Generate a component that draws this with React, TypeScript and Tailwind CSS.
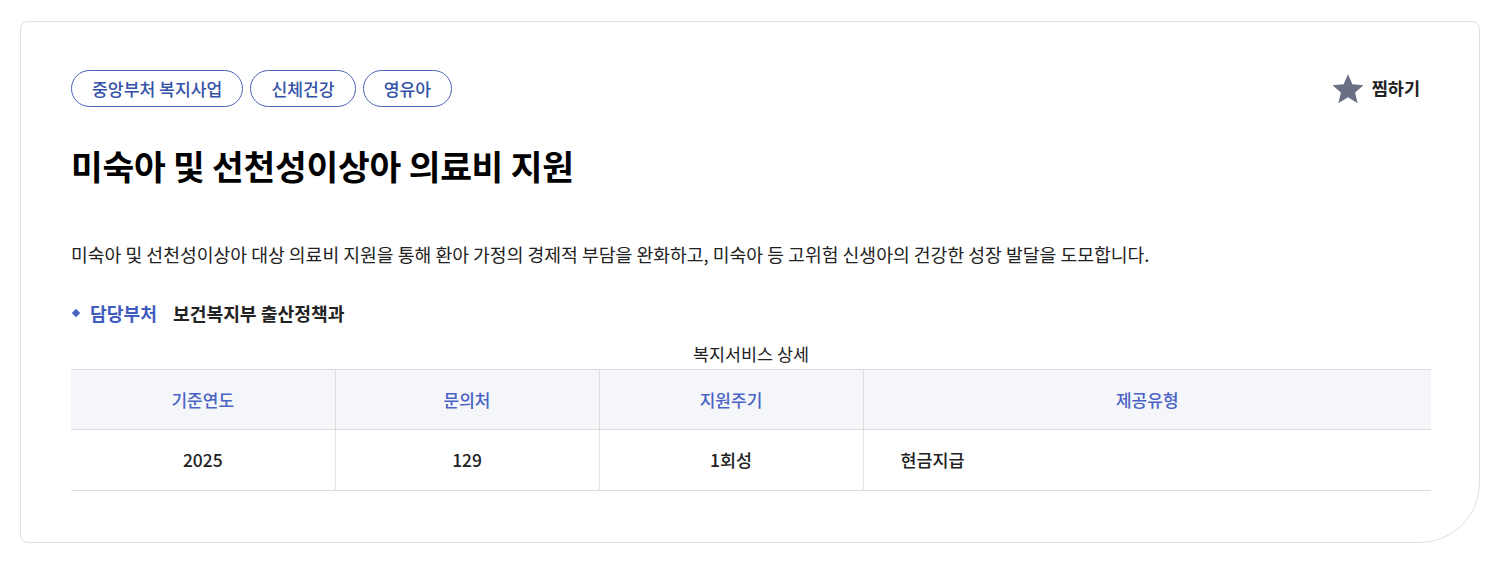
const tags = ["중앙부처 복지사업", "신체건강", "영유아"];

const heads = ["기준연도", "문의처", "지원주기", "제공유형"];

export default function App() {
  return (
    <div
      className="w-[1500px] h-[563px] bg-white pt-[21px] px-[20px]"
      style={{ fontFamily: '"Noto Sans CJK KR", "Noto Sans", sans-serif' }}
    >
      <div className="h-[522px] border border-[#e0e0e0] rounded-[8px] rounded-br-[60px] pl-[50px] pr-[48px] pt-[48px]">
        <div className="flex items-center justify-between">
          <div className="flex gap-[7px]">
            {tags.map((t) => (
              <span
                key={t}
                className="h-[37px] px-[20px] flex items-center rounded-full border border-[#4a63b8] text-[#3452a8] text-[17.2px] font-medium"
              >
                {t}
              </span>
            ))}
          </div>
          <button className="flex items-center gap-[7px] mr-[11px] text-[17.5px] font-bold text-[#222]">
            <svg width="34" height="34" viewBox="0 0 24 24">
              <path
                d="M12 1.5l3.1 7.2 7.8.6-5.9 5.1 1.8 7.6L12 17.9l-6.8 4.1 1.8-7.6-5.9-5.1 7.8-.6z"
                fill="#6b6f85"
              />
            </svg>
            찜하기
          </button>
        </div>

        <h1 className="mt-[35px] text-[34.5px] leading-[46px] font-bold text-black tracking-[-0.25px]">
          미숙아 및 선천성이상아 의료비 지원
        </h1>

        <p className="mt-[53px] text-[18.25px] leading-[26px] text-[#222]">
          미숙아 및 선천성이상아 대상 의료비 지원을 통해 환아 가정의 경제적 부담을 완화하고, 미숙아 등 고위험 신생아의 건강한 성장 발달을 도모합니다.
        </p>

        <div className="mt-[33px] flex items-center text-[18.2px] font-bold leading-[26px]">
          <span className="w-[6px] h-[6px] bg-[#4a63c4] rotate-45 ml-[2px] mr-[11px]" />
          <span className="text-[#3f5bbf]">담당부처</span>
          <span className="ml-[16px] text-[#222]">보건복지부 출산정책과</span>
        </div>

        <table className="mt-[14px] w-full border-collapse table-fixed">
          <caption className="text-[17.4px] leading-[28px] text-[#222] pb-[1px]">
            복지서비스 상세
          </caption>
          <thead>
            <tr className="h-[60px] bg-[#f5f6fa] border-t border-b border-[#dcdcdc]">
              {heads.map((h, i) => (
                <th
                  key={h}
                  className={`text-[17px] font-medium text-[#4a63c4] ${i < 3 ? "w-[264px] border-r border-[#dcdcdc]" : ""}`}
                >
                  {h}
                </th>
              ))}
            </tr>
          </thead>
          <tbody>
            <tr className="h-[61px] border-b border-[#dcdcdc] text-[17.4px] font-medium text-[#222]">
              <td className="text-center border-r border-[#e4e4e4]">2025</td>
              <td className="text-center border-r border-[#e4e4e4]">129</td>
              <td className="text-center border-r border-[#e4e4e4]">1회성</td>
              <td className="pl-[37px]">현금지급</td>
            </tr>
          </tbody>
        </table>
      </div>
    </div>
  );
}
